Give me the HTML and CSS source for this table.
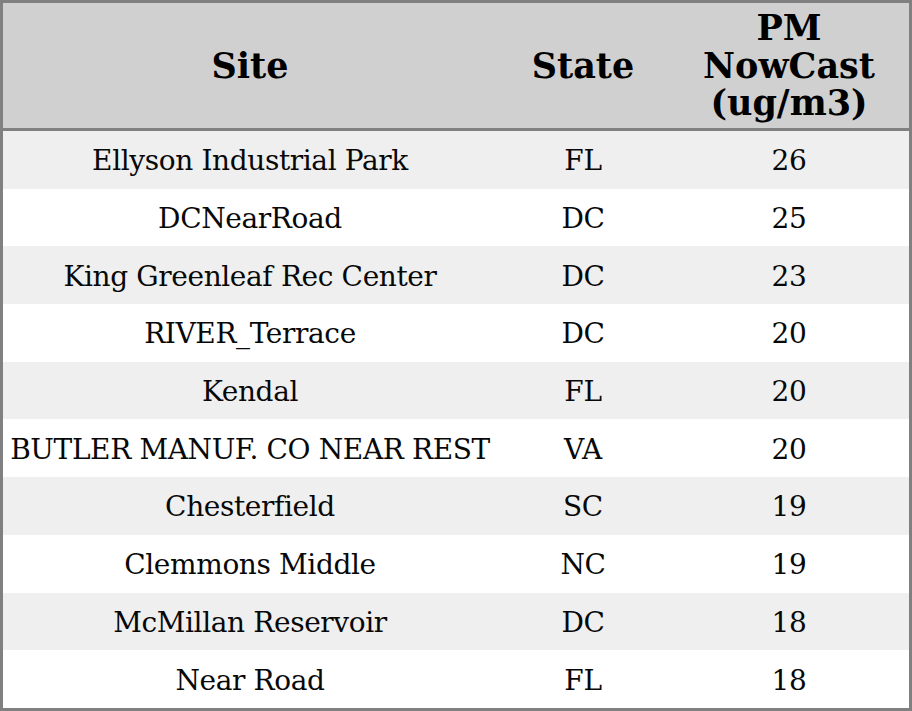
FILE: index.html
```html
<!DOCTYPE html>
<html>
<head>
<meta charset="utf-8">
<link rel="stylesheet" href="styles.css">
</head>
<body>
<table class="aq-table">
  <thead>
    <tr>
      <th class="col-site">Site</th>
      <th class="col-state">State</th>
      <th class="col-pm">PM<br>NowCast<br>(ug/m3)</th>
    </tr>
  </thead>
  <tbody>
    <tr><td>Ellyson Industrial Park</td><td>FL</td><td>26</td></tr>
    <tr><td>DCNearRoad</td><td>DC</td><td>25</td></tr>
    <tr><td>King Greenleaf Rec Center</td><td>DC</td><td>23</td></tr>
    <tr><td>RIVER_Terrace</td><td>DC</td><td>20</td></tr>
    <tr><td>Kendal</td><td>FL</td><td>20</td></tr>
    <tr><td>BUTLER MANUF. CO NEAR REST</td><td>VA</td><td>20</td></tr>
    <tr><td>Chesterfield</td><td>SC</td><td>19</td></tr>
    <tr><td>Clemmons Middle</td><td>NC</td><td>19</td></tr>
    <tr><td>McMillan Reservoir</td><td>DC</td><td>18</td></tr>
    <tr><td>Near Road</td><td>FL</td><td>18</td></tr>
  </tbody>
</table>
</body>
</html>
```
FILE: styles.css
```css
html, body {
  margin: 0;
  padding: 0;
  background: #ffffff;
}
.aq-table {
  width: 912px;
  height: 711px;
  border-collapse: collapse;
  border: 3px solid #808080;
  font-family: "DejaVu Serif", serif;
  color: #000;
  table-layout: fixed;
}
.aq-table th {
  background: #d0d0d0;
  font-weight: bold;
  font-size: 35px;
  line-height: 37.5px;
  height: 125px;
  padding: 0;
  border-bottom: 3px solid #808080;
  text-align: center;
  vertical-align: middle;
}
.col-site { width: 494px; }
.col-state { width: 172px; }
.col-pm { width: 240px; }
.aq-table td {
  font-size: 28px;
  letter-spacing: -0.38px;
  height: 55.7px;
  padding: 2px 0 0 0;
  text-align: center;
  vertical-align: middle;
  white-space: nowrap;
  color: #080808;
}
.aq-table tbody tr:nth-child(odd) td {
  background: #efefef;
}
```
